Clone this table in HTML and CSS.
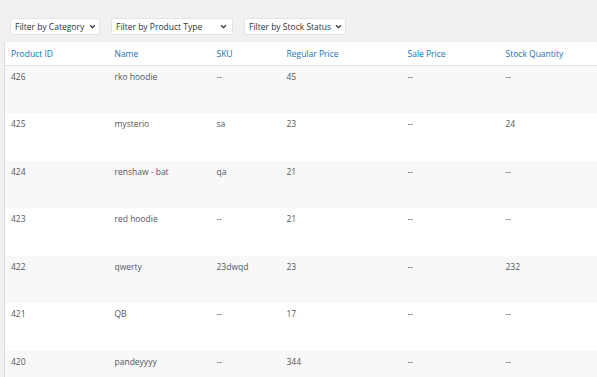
FILE: index.html
```html
<!DOCTYPE html>
<html>
<head>
<meta charset="utf-8">
<title>Products</title>
<link rel="stylesheet" href="styles.css">
</head>
<body>
<div class="wrap">
	<div class="filters">
		<div class="sel sel-cat"><span>Filter by Category</span><svg viewBox="0 0 10 10" width="7" height="7"><path d="M1.5 3.2 L5 6.7 L8.5 3.2" fill="none" stroke="#2c3338" stroke-width="1.8"/></svg></div>
		<div class="sel sel-type"><span>Filter by Product Type</span><svg viewBox="0 0 10 10" width="7" height="7"><path d="M1.5 3.2 L5 6.7 L8.5 3.2" fill="none" stroke="#2c3338" stroke-width="1.8"/></svg></div>
		<div class="sel sel-stock"><span>Filter by Stock Status</span><svg viewBox="0 0 10 10" width="7" height="7"><path d="M1.5 3.2 L5 6.7 L8.5 3.2" fill="none" stroke="#2c3338" stroke-width="1.8"/></svg></div>
	</div>
	<table class="list">
		<colgroup>
			<col class="c-id"><col class="c-name"><col class="c-sku"><col class="c-reg"><col class="c-sale"><col>
		</colgroup>
		<thead>
			<tr><th>Product ID</th><th>Name</th><th>SKU</th><th>Regular Price</th><th>Sale Price</th><th>Stock Quantity</th></tr>
		</thead>
		<tbody>
			<tr><td>426</td><td>rko hoodie</td><td>--</td><td>45</td><td>--</td><td>--</td></tr>
			<tr><td>425</td><td>mysterio</td><td>sa</td><td>23</td><td>--</td><td>24</td></tr>
			<tr><td>424</td><td>renshaw - bat</td><td>qa</td><td>21</td><td>--</td><td>--</td></tr>
			<tr><td>423</td><td>red hoodie</td><td>--</td><td>21</td><td>--</td><td>--</td></tr>
			<tr><td>422</td><td>qwerty</td><td>23dwqd</td><td>23</td><td>--</td><td>232</td></tr>
			<tr><td>421</td><td>QB</td><td>--</td><td>17</td><td>--</td><td>--</td></tr>
			<tr><td>420</td><td>pandeyyyy</td><td>--</td><td>344</td><td>--</td><td>--</td></tr>
		</tbody>
	</table>
</div>
</body>
</html>
```

FILE: styles.css
```css
*,*:before,*:after{
	padding: 0;
	margin: 0;
	box-sizing: border-box;
}
body{
	background-color: #f1f1f1;
	font-family: "Open Sans", "Noto Sans", sans-serif;
	font-size: 8.5px;
	color: #50575e;
	overflow: hidden;
}
.wrap{
	padding-left: 4px;
}
.filters{
	display: flex;
	gap: 11px;
	padding: 18px 0 6px 6px;
}
.sel{
	display: flex;
	align-items: center;
	justify-content: space-between;
	height: 17px;
	padding: 0 3px 0 4px;
	background-color: #fff;
	border: 1px solid #e4e4e4;
	border-radius: 2px;
	color: #2c3338;
	font-size: 8.5px;
	white-space: nowrap;
}
.sel-cat{
	width: 90px;
}
.sel-type{
	width: 122px;
	padding-right: 5px;
}
.sel-stock{
	width: 102px;
}
.list{
	width: 593px;
	table-layout: fixed;
	border-collapse: collapse;
	background-color: #fff;
	border-left: 1px solid #dcdcde;
}
.c-id{ width: 104px; }
.c-name{ width: 102px; }
.c-sku{ width: 70px; }
.c-reg{ width: 121px; }
.c-sale{ width: 98px; }
.list th{
	height: 24px;
	padding: 0 6px;
	text-align: left;
	font-weight: normal;
	color: #2271b1;
	border-bottom: 1px solid #e1e1e1;
	border-top: 1px solid #ececec;
}
.list td{
	height: 47.5px;
	padding: 5px 6px 0;
	vertical-align: top;
	color: #50575e;
}
.list tbody tr:nth-child(odd){
	background-color: #f8f8f8;
}
```
